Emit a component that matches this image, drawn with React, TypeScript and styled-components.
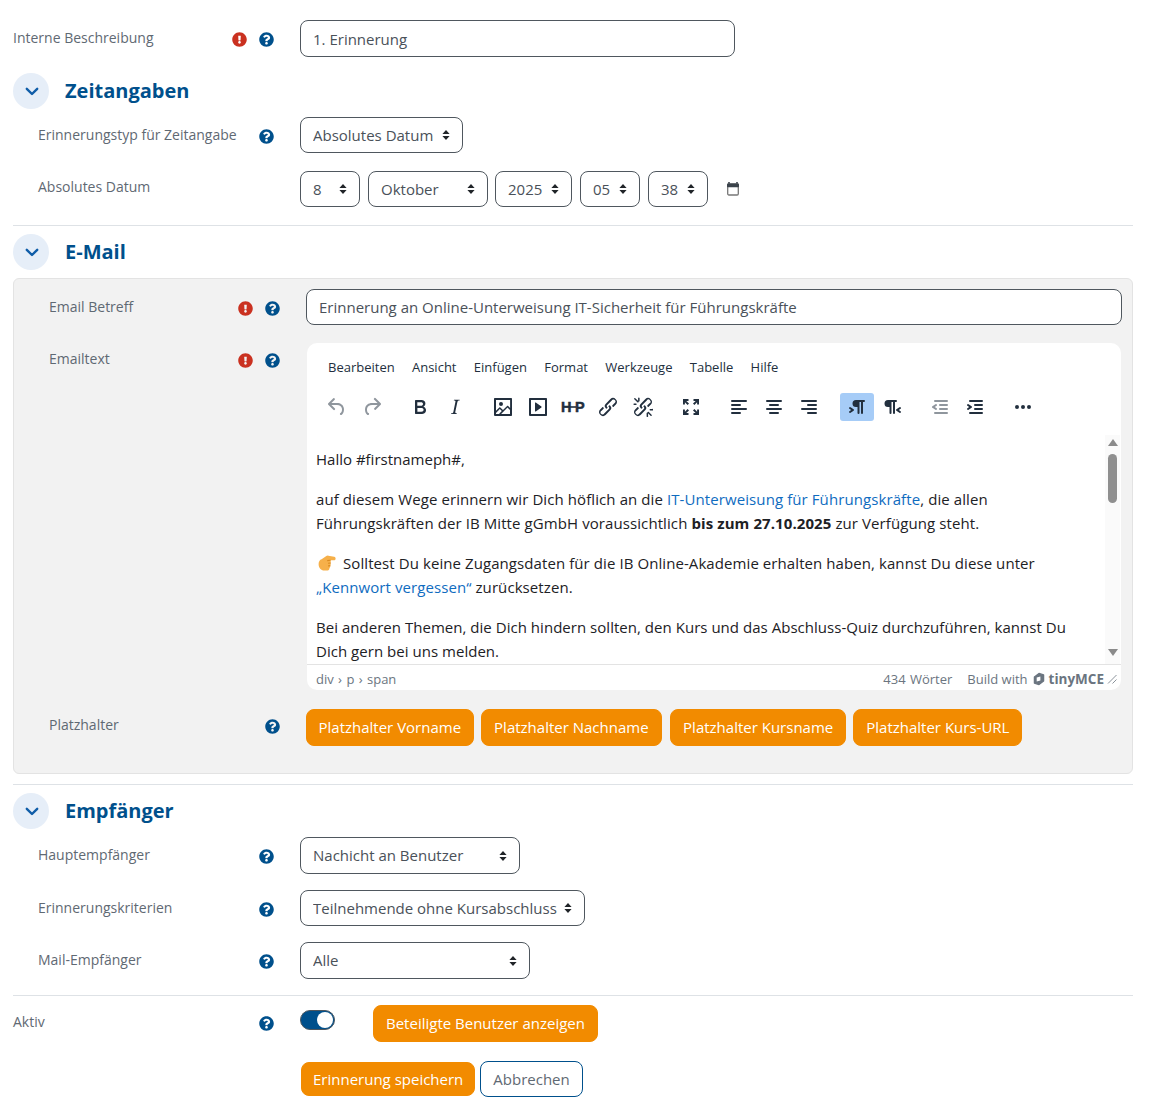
import React from "react";
import styled, { createGlobalStyle } from "styled-components";
import { FaQuestionCircle, FaExclamationCircle } from "react-icons/fa";

const Global = createGlobalStyle`
  html, body { margin: 0; padding: 0; background: #fff; }
  body { font-family: "Open Sans", "Noto Sans", sans-serif; font-size: 15px; color: #1d2125; }
  * { box-sizing: border-box; }
`;

const arrows = `url("data:image/svg+xml,%3Csvg xmlns='http://www.w3.org/2000/svg' width='10' height='12' viewBox='0 0 10 12'%3E%3Cpath d='M5 1l3.6 4H1.4zM5 11L1.4 7h7.2z' fill='%23212529'/%3E%3C/svg%3E")`;

const Page = styled.div`
  width: 1120px;
  margin-left: 13px;
  padding-top: 20px;
  padding-bottom: 21px;
`;
const Row = styled.div<{ $mb?: number; $offset?: number }>`
  display: grid;
  grid-template-columns: ${(p) => 218 + (p.$offset ?? 0)}px 69px 1fr;
  margin-bottom: ${(p) => p.$mb ?? 0}px;
`;
const Label = styled.div<{ $pad?: number; $top?: number }>`
  padding-left: ${(p) => p.$pad ?? 0}px;
  padding-top: ${(p) => p.$top ?? 7}px;
  font-size: 14px;
  line-height: 21px;
  white-space: nowrap;
  color: #5f6973;
`;
const Icons = styled.div<{ $top?: number }>`
  display: grid;
  grid-template-columns: 16px 16px;
  column-gap: 11.5px;
  padding-top: ${(p) => p.$top ?? 12}px;
  align-items: start;
  justify-items: center;
  svg { display: block; }
`;
const Warn = styled(FaExclamationCircle)`
  color: #ca3120;
  grid-column: 1;
`;
const Help = styled(FaQuestionCircle)`
  color: #00508c;
  grid-column: 2;
`;
const Controls = styled.div<{ $gap?: number }>`
  display: flex;
  align-items: center;
  gap: ${(p) => p.$gap ?? 8}px;
`;
const TextInput = styled.input<{ $w: number; $h?: number }>`
  width: ${(p) => p.$w}px;
  height: ${(p) => p.$h ?? 37}px;
  border: 1px solid #4f575e;
  border-radius: 8px;
  padding: 0 12px;
  font: 15px "Open Sans", sans-serif;
  color: #4a5159;
  background: #fff;
  outline: none;
`;
const Select = styled.select<{ $w: number; $h?: number; $mr?: number }>`
  appearance: none;
  width: ${(p) => p.$w}px;
  height: ${(p) => p.$h ?? 36}px;
  margin-right: ${(p) => p.$mr ?? 0}px;
  border: 1px solid #4f575e;
  border-radius: 8px;
  padding: 0 12px ${(p) => (p.$h === 37 ? 2 : 0)}px;
  font: 15px "Open Sans", sans-serif;
  color: #4a5159;
  background: #fff ${arrows} no-repeat right 11px center;
  outline: none;
`;
const SectionHead = styled.div<{ $mb?: number }>`
  display: flex;
  align-items: center;
  gap: 16px;
  height: 36px;
  margin-bottom: ${(p) => p.$mb ?? 8}px;
`;
const Chevron = styled.div`
  width: 36px;
  height: 36px;
  border-radius: 50%;
  background: #e6eef8;
  display: flex;
  align-items: center;
  justify-content: center;
  padding-left: 1px;
  color: #0f5da8;
`;
const Title = styled.h3`
  margin: 0;
  padding-bottom: 2px;
  font-size: 20px;
  font-weight: 700;
  color: #00508c;
`;
const Rule = styled.hr<{ $mt: number; $mb: number }>`
  border: 0;
  border-top: 1px solid #dee2e6;
  margin: ${(p) => p.$mt}px 0 ${(p) => p.$mb}px;
`;
const Panel = styled.div`
  background: #f2f2f2;
  border: 1px solid #e3e3e3;
  border-radius: 6px;
  padding: 10px 0 27px;
  height: 496px;
`;
const Editor = styled.div`
  width: 814px;
  height: 347px;
  margin-left: 1px;
  background: #fff;
  border-radius: 10px;
  display: flex;
  flex-direction: column;
  overflow: hidden;
`;
const MenuBar = styled.div`
  display: flex;
  gap: 17.3px;
  height: 48px;
  padding: 15px 0 0 21px;
  font-size: 13px;
  line-height: 18px;
  color: #222f3e;
`;
const ToolBar = styled.div`
  display: flex;
  height: 44px;
  padding: 2px 0 0 13px;
`;
const Group = styled.div`
  display: flex;
  gap: 1px;
  margin-right: 14px;
`;
const Tool = styled.div<{ $active?: boolean; $off?: boolean }>`
  width: 34px;
  height: 28px;
  border-radius: 3px;
  display: flex;
  align-items: center;
  justify-content: center;
  background: ${(p) => (p.$active ? "#a6ccf7" : "transparent")};
  color: #222f3e;
  opacity: ${(p) => (p.$off ? 0.5 : 1)};
  svg { fill: currentColor; display: block; }
`;
const H5PText = styled.text`
  font-family: "Liberation Sans", sans-serif;
  font-weight: 700;
  font-size: 14.5px;
  stroke: currentColor;
  stroke-width: 0.5px;
`;
const Body = styled.div`
  flex: 1;
  min-height: 0;
  display: flex;
`;
const Content = styled.div`
  flex: 1;
  height: 229px;
  overflow: hidden;
  padding: 12px 17px 0 9px;
  font-size: 15px;
  line-height: 24px;
  color: #1d2125;
  a { color: #0f6cbf; text-decoration: none; }
  b { font-weight: 700; }
`;
const Para = styled.p<{ $ls?: number }>`
  margin: 0 0 16px;
  letter-spacing: ${(p) => p.$ls ?? 0}px;
`;
const Hand = styled.svg`
  display: inline-block;
  width: 18px;
  height: 18px;
  vertical-align: -3px;
  margin: 0 7px 0 2px;
`;
const Track = styled.div`
  width: 15px;
  height: 229px;
  margin-right: 1px;
  background: #fafafa;
  display: flex;
  flex-direction: column;
  align-items: center;
  padding-top: 4px;
`;
const ScrollUp = styled.div`
  width: 0;
  height: 0;
  border-left: 5px solid transparent;
  border-right: 5px solid transparent;
  border-bottom: 7px solid #8a8a8a;
`;
const Thumb = styled.div`
  width: 9px;
  height: 49px;
  border-radius: 5px;
  background: #8f8f8f;
  margin-top: 8px;
`;
const ScrollDown = styled.div`
  width: 0;
  height: 0;
  border-left: 5px solid transparent;
  border-right: 5px solid transparent;
  border-top: 7px solid #8a8a8a;
  margin-top: auto;
  margin-bottom: 8px;
`;
const Status = styled.div`
  height: 26px;
  border-top: 1px solid #e3e3e3;
  display: flex;
  align-items: center;
  padding: 3px 4px 0 9px;
  font-size: 13px;
  color: #6b7580;
`;
const Path = styled.span`
  margin-right: auto;
  word-spacing: 1px;
`;
const Words = styled.span`
  margin-right: 15px;
  word-spacing: 1px;
`;
const Tiny = styled.span`
  display: flex;
  align-items: center;
  gap: 4px;
  margin-left: 5px;
  font-weight: 700;
  font-size: 13.5px;
  svg { display: block; }
`;
const Resize = styled.svg`
  margin-left: 3px;
  display: block;
`;
const Orange = styled.button<{ $h?: number; $pad?: number; $ml?: number }>`
  height: ${(p) => p.$h ?? 37}px;
  margin-left: ${(p) => p.$ml ?? 0}px;
  padding: 0 ${(p) => p.$pad ?? 12}px ${(p) => (p.$h === 34 ? 0 : 2)}px;
  background: #f28b00;
  color: #fff;
  border: 1px solid #f28b00;
  border-radius: 8px;
  font: 15px "Open Sans", sans-serif;
  white-space: nowrap;
`;
const Outline = styled.button`
  height: 36px;
  padding: 0 12px;
  background: #fff;
  color: #5f6973;
  border: 1px solid #00508c;
  border-radius: 8px;
  font: 15px "Open Sans", sans-serif;
`;
const Toggle = styled.div`
  width: 35px;
  height: 20px;
  border-radius: 10px;
  background: #00508c;
  border: 1px solid #4f575e;
  display: flex;
  justify-content: flex-end;
  align-items: center;
  padding-right: 1px;
  margin-top: 5px;
`;
const Knob = styled.div`
  width: 16px;
  height: 16px;
  border-radius: 50%;
  background: #fff;
`;
const AktivRow = styled.div`
  display: flex;
  gap: 38px;
  align-items: flex-start;
`;
const SaveRow = styled.div`
  display: flex;
  align-items: center;
  gap: 5px;
  padding-left: 288px;
  margin-top: 19px;
`;

const Glyph = ({ d, s = 24 }: { d: string; s?: number }) => (
  <svg width={s} height={s} viewBox="0 0 24 24"><path d={d} /></svg>
);

const ChevronIcon = () => (
  <svg width="14" height="9" viewBox="0 0 14 9" fill="none" stroke="currentColor" strokeWidth="2.4" strokeLinecap="round" strokeLinejoin="round">
    <path d="M1.8 1.8L7 7l5.2-5.2" />
  </svg>
);

const CalendarIcon = () => (
  <svg width="14" height="16" viewBox="0 0 14 16" style={{ marginLeft: 10 }}>
    <path d="M3 1v2M11 1v2" stroke="#3b434b" strokeWidth="1.6" />
    <rect x="1.7" y="3" width="10.6" height="11" rx="1.2" fill="#fff" stroke="#777" strokeWidth="1.3" />
    <rect x="1" y="2.6" width="12" height="3.6" rx="1" fill="#3b434b" />
  </svg>
);

const I = {
  undo: "M6.4 8H12c3.7 0 6.2 2 6.8 5.1.6 2.7-.4 5.6-2.3 6.8a1 1 0 0 1-1-1.8c1.1-.6 1.8-2.7 1.4-4.6-.5-2.1-2.1-3.5-4.9-3.5H6.4l3.3 3.3a1 1 0 1 1-1.4 1.4l-5-5a1 1 0 0 1 0-1.4l5-5a1 1 0 0 1 1.4 1.4L6.4 8Z",
  redo: "M17.6 10H12c-2.8 0-4.4 1.4-4.9 3.5-.4 2 .3 4 1.4 4.6a1 1 0 1 1-1 1.8c-2-1.2-2.9-4.1-2.3-6.8.6-3 3-5.1 6.8-5.1h5.6l-3.3-3.3a1 1 0 1 1 1.4-1.4l5 5a1 1 0 0 1 0 1.4l-5 5a1 1 0 0 1-1.4-1.4l3.3-3.3Z",
  bold: "M7.8 19c-.3 0-.5 0-.6-.2l-.2-.5V5.7c0-.2 0-.4.2-.5l.6-.2h5c1.5 0 2.7.3 3.5 1 .7.6 1.1 1.4 1.1 2.5a3 3 0 0 1-.6 1.9c-.4.6-1 1-1.6 1.2.4.1.9.3 1.3.6s.8.7 1 1.2c.4.4.5 1 .5 1.6 0 1.3-.4 2.3-1.3 3-.8.7-2.1 1-3.8 1H7.8Zm5-8.3c.6 0 1.2-.1 1.6-.5.4-.3.6-.7.6-1.3 0-1.1-.8-1.7-2.3-1.7H9.3v3.5h3.4Zm.5 6c.7 0 1.3-.1 1.7-.4.4-.4.6-.9.6-1.5s-.2-1-.7-1.4c-.4-.3-1-.4-2-.4H9.4v3.8h4Z",
  italic: "M16.7 4.7l-.1.9h-.3c-.6 0-1 0-1.4.3-.3.3-.4.6-.5 1.1l-2.1 9.8v.6c0 .5.4.8 1.4.8h.2l-.2.8H8l.2-.8h.2c1.1 0 1.8-.5 2-1.5l2-9.8.1-.5c0-.6-.4-.8-1.4-.8h-.3l.2-.9h5.8Z",
  image: "M5 15.7l3.3-3.2c.3-.3.7-.3 1 0L12 15l4.1-4c.3-.4.8-.4 1 0l2 1.9V5H5v10.7ZM5 18V19h3l2.8-2.9-2-2L5 17.9Zm14-3l-2.5-2.4-6.4 6.5H19v-4ZM4 3h16c.6 0 1 .4 1 1v16c0 .6-.4 1-1 1H4a1 1 0 0 1-1-1V4c0-.6.4-1 1-1Zm6 8a2 2 0 1 0 0-4 2 2 0 0 0 0 4Z",
  embed: "M4 3h16c.6 0 1 .4 1 1v16c0 .6-.4 1-1 1H4a1 1 0 0 1-1-1V4c0-.6.4-1 1-1Zm1 2v14h14V5H5Zm4.8 2.6l5.6 4a.5.5 0 0 1 0 .8l-5.6 4A.5.5 0 0 1 9 16V8a.5.5 0 0 1 .8-.4Z",
  link: "M6.2 12.3a1 1 0 0 1 1.4 1.4l-2 2a2 2 0 1 0 2.6 2.8l4.8-4.8a1 1 0 0 0 0-1.4 1 1 0 1 1 1.4-1.3 2.9 2.9 0 0 1 0 4L9.6 20a3.9 3.9 0 0 1-5.5-5.5l2-2Zm11.6-.6a1 1 0 0 1-1.4-1.4l2-2a2 2 0 1 0-2.6-2.8L11 10.3a1 1 0 0 0 0 1.4A1 1 0 1 1 9.6 13a2.9 2.9 0 0 1 0-4L14.4 4a3.9 3.9 0 0 1 5.5 5.5l-2 2Z",
  unlink: "M6.2 12.3a1 1 0 0 1 1.4 1.4l-2.1 2a2 2 0 1 0 2.7 2.8l4.8-4.8a1 1 0 0 0 0-1.4 1 1 0 1 1 1.4-1.3 2.9 2.9 0 0 1 0 4L9.6 20a3.9 3.9 0 0 1-5.5-5.5l2-2Zm11.6-.6a1 1 0 0 1-1.4-1.4l2.1-2a2 2 0 1 0-2.7-2.8L11 10.3a1 1 0 0 0 0 1.4A1 1 0 1 1 9.6 13a2.9 2.9 0 0 1 0-4L14.4 4a3.9 3.9 0 0 1 5.5 5.5l-2 2ZM7.6 6.3a.8.8 0 0 1-1 1.1L3.3 4.2a.7.7 0 1 1 1-1l3.2 3.1ZM5.1 8.6a.8.8 0 0 1 0 1.5H3a.8.8 0 0 1 0-1.5H5Zm3.5-2.5a.8.8 0 0 1-1.5 0V3a.8.8 0 0 1 1.5 0V5Zm8 11.6a.8.8 0 0 1 1-1l3.2 3.2a.8.8 0 0 1-1 1l-3.2-3.2Zm2.5-2.3a.8.8 0 0 1 0-1.5H21a.8.8 0 1 1 0 1.5h-2Zm-3.5 2.5a.8.8 0 0 1 1.5 0V21a.8.8 0 1 1-1.5 0V19Z",
  full: "M4 4h5.5v1.9H7.3L10 8.6 8.6 10 5.9 7.3v2.2H4V4Zm16 0v5.5h-1.9V7.3L15.4 10 14 8.6l2.7-2.7h-2.2V4H20ZM4 20v-5.5h1.9v2.2L8.6 14l1.4 1.4-2.7 2.7h2.2V20H4Zm16 0h-5.5v-1.9h2.2L14 15.4l1.4-1.4 2.7 2.7v-2.2H20V20Z",
  left: "M5 5h14a1 1 0 0 1 0 2H5a1 1 0 0 1 0-2Zm0 4h8a1 1 0 0 1 0 2H5a1 1 0 0 1 0-2Zm0 8h8a1 1 0 0 1 0 2H5a1 1 0 0 1 0-2Zm0-4h14a1 1 0 0 1 0 2H5a1 1 0 0 1 0-2Z",
  center: "M5 5h14a1 1 0 0 1 0 2H5a1 1 0 0 1 0-2Zm3 4h8a1 1 0 0 1 0 2H8a1 1 0 0 1 0-2Zm0 8h8a1 1 0 0 1 0 2H8a1 1 0 0 1 0-2Zm-3-4h14a1 1 0 0 1 0 2H5a1 1 0 0 1 0-2Z",
  right: "M5 5h14a1 1 0 0 1 0 2H5a1 1 0 0 1 0-2Zm6 4h8a1 1 0 0 1 0 2h-8a1 1 0 0 1 0-2Zm0 8h8a1 1 0 0 1 0 2h-8a1 1 0 0 1 0-2Zm-6-4h14a1 1 0 0 1 0 2H5a1 1 0 0 1 0-2Z",
  ltr: "M11 5h8a1 1 0 0 1 0 2h-1v11a1 1 0 0 1-2 0V7h-1.5v11a1 1 0 0 1-2 0v-6H11a3.5 3.5 0 0 1 0-7ZM4.4 16.2L6.2 15l-1.8-1.2a1 1 0 0 1 1.2-1.6l3 2a1 1 0 0 1 0 1.6l-3 2a1 1 0 1 1-1.2-1.6Z",
  rtl: "M8 5h8a1 1 0 0 1 0 2h-1v11a1 1 0 0 1-2 0V7h-1.5v11a1 1 0 0 1-2 0v-6H8A3.5 3.5 0 0 1 8 5Zm8.4 9.2l3-2a1 1 0 0 1 1.2 1.6L18.8 15l1.8 1.2a1 1 0 1 1-1.2 1.6l-3-2a1 1 0 0 1 0-1.6Z",
  outdent: "M7 5h12a1 1 0 0 1 0 2H7a1 1 0 1 1 0-2Zm5 4h7a1 1 0 0 1 0 2h-7a1 1 0 0 1 0-2Zm0 4h7a1 1 0 0 1 0 2h-7a1 1 0 0 1 0-2Zm-5 4h12a1 1 0 0 1 0 2H7a1 1 0 0 1 0-2Zm1.6-3.8a1 1 0 0 1-1.2 1.6l-3-2a1 1 0 0 1 0-1.6l3-2a1 1 0 0 1 1.2 1.6L6.8 12l1.8 1.2Z",
  indent: "M7 5h12a1 1 0 0 1 0 2H7a1 1 0 1 1 0-2Zm5 4h7a1 1 0 0 1 0 2h-7a1 1 0 0 1 0-2Zm0 4h7a1 1 0 0 1 0 2h-7a1 1 0 0 1 0-2Zm-5 4h12a1 1 0 0 1 0 2H7a1 1 0 0 1 0-2Zm-2.6-3.8L6.2 12l-1.8-1.2a1 1 0 0 1 1.2-1.6l3 2a1 1 0 0 1 0 1.6l-3 2a1 1 0 1 1-1.2-1.6Z",
  more: "M6 10a2 2 0 0 1 2 2 2 2 0 0 1-2 2 2 2 0 0 1-2-2 2 2 0 0 1 2-2Zm12 0a2 2 0 0 1 2 2 2 2 0 0 1-2 2 2 2 0 0 1-2-2 2 2 0 0 1 2-2Zm-6 0a2 2 0 0 1 2 2 2 2 0 0 1-2 2 2 2 0 0 1-2-2 2 2 0 0 1 2-2Z",
};

const HandIcon = () => (
  <Hand viewBox="0 0 18 18">
    <g transform="translate(0 -2) scale(1 1.25)">
      <path d="M.6 9.5c0-2 1.2-3.4 3-3.8L7.6 3.6c1-.5 1.8-.8 2.7-.7l5.9.9c1 .2 1.5.8 1.4 1.5-.1.8-.8 1.2-1.7 1.2h-3.5c.4.7.5 1.5.2 2.2.3.7.2 1.5-.3 2.1.1.8-.2 1.5-.8 1.9 0 1-.7 2-1.8 2H6.2C3 14.7.6 12.7.6 9.5Z" fill="#f6b04a" />
      <path d="M12.6 6.6l-3.4.3M12.7 8.8l-2.6.2M12.3 10.9l-2.2.2" stroke="#d98a1f" strokeWidth="0.9" fill="none" />
    </g>
  </Hand>
);

const H5PIcon = () => (
  <svg width="24" height="24" viewBox="0 0 24 24">
    <H5PText x="0" y="17">H</H5PText>
    <H5PText x="14" y="17">P</H5PText>
    <rect x="8" y="11.2" width="7" height="1.6" />
  </svg>
);

const TinyLogo = () => (
  <svg width="12" height="14" viewBox="0 0 13 14">
    <path d="M6.5 1l5 1.6v6.6L6.5 13l-5-1.6V4.8z" fill="#6b7580" stroke="#6b7580" strokeWidth="1.4" strokeLinejoin="round" />
    <path d="M4 5.4l4-1.2v4.4L4 9.8z" fill="#fff" />
  </svg>
);

export default function App() {
  return (
    <Page>
      <Global />
      <Row $mb={16}>
        <Label>Interne Beschreibung</Label>
        <Icons><Warn size={15} /><Help size={15} /></Icons>
        <Controls><TextInput $w={435} defaultValue="1. Erinnerung" /></Controls>
      </Row>

      <SectionHead>
        <Chevron><ChevronIcon /></Chevron>
        <Title>Zeitangaben</Title>
      </SectionHead>
      <Row $mb={18}>
        <Label $pad={25}>Erinnerungstyp für Zeitangabe</Label>
        <Icons><Help size={15} /></Icons>
        <Controls><Select $w={163}><option>Absolutes Datum</option></Select></Controls>
      </Row>
      <Row>
        <Label $pad={25} $top={5}>Absolutes Datum</Label>
        <Icons />
        <Controls>
          <Select $w={60}><option>8</option></Select>
          <Select $w={120} $mr={-1}><option>Oktober</option></Select>
          <Select $w={77}><option>2025</option></Select>
          <Select $w={60}><option>05</option></Select>
          <Select $w={60}><option>38</option></Select>
          <CalendarIcon />
        </Controls>
      </Row>
      <Rule $mt={18} $mb={8} />

      <SectionHead>
        <Chevron><ChevronIcon /></Chevron>
        <Title>E-Mail</Title>
      </SectionHead>
      <Panel>
        <Row $mb={18} $offset={5}>
          <Label $pad={35}>Email Betreff</Label>
          <Icons><Warn size={15} /><Help size={15} /></Icons>
          <Controls><TextInput $w={816} $h={36} defaultValue="Erinnerung an Online-Unterweisung IT-Sicherheit für Führungskräfte" /></Controls>
        </Row>
        <Row $mb={19} $offset={5}>
          <Label $pad={35} $top={5}>Emailtext</Label>
          <Icons $top={10}><Warn size={15} /><Help size={15} /></Icons>
          <Editor>
            <MenuBar>
              <span>Bearbeiten</span><span>Ansicht</span><span>Einfügen</span><span>Format</span><span>Werkzeuge</span><span>Tabelle</span><span>Hilfe</span>
            </MenuBar>
            <ToolBar>
              <Group>
                <Tool $off><Glyph d={I.undo} /></Tool>
                <Tool $off><Glyph d={I.redo} /></Tool>
              </Group>
              <Group>
                <Tool><Glyph d={I.bold} /></Tool>
                <Tool><Glyph d={I.italic} /></Tool>
              </Group>
              <Group>
                <Tool><Glyph d={I.image} /></Tool>
                <Tool><Glyph d={I.embed} /></Tool>
                <Tool><H5PIcon /></Tool>
                <Tool><Glyph d={I.link} /></Tool>
                <Tool><Glyph d={I.unlink} /></Tool>
              </Group>
              <Group><Tool><Glyph d={I.full} /></Tool></Group>
              <Group>
                <Tool><Glyph d={I.left} /></Tool>
                <Tool><Glyph d={I.center} /></Tool>
                <Tool><Glyph d={I.right} /></Tool>
              </Group>
              <Group>
                <Tool $active><Glyph d={I.ltr} /></Tool>
                <Tool><Glyph d={I.rtl} /></Tool>
              </Group>
              <Group>
                <Tool $off><Glyph d={I.outdent} /></Tool>
                <Tool><Glyph d={I.indent} /></Tool>
              </Group>
              <Group><Tool><Glyph d={I.more} /></Tool></Group>
            </ToolBar>
            <Body>
              <Content>
                <Para>Hallo #firstnameph#,</Para>
                <Para $ls={0.09}>auf diesem Wege erinnern wir Dich höflich an die <a>IT-Unterweisung für Führungskräfte</a>, die allen Führungskräften der IB Mitte gGmbH voraussichtlich <b>bis zum 27.10.2025</b> zur Verfügung steht.</Para>
                <Para $ls={0.08}><HandIcon />Solltest Du keine Zugangsdaten für die IB Online-Akademie erhalten haben, kannst Du diese unter <a>„Kennwort vergessen“</a> zurücksetzen.</Para>
                <Para $ls={0.03}>Bei anderen Themen, die Dich hindern sollten, den Kurs und das Abschluss-Quiz durchzuführen, kannst Du Dich gern bei uns melden.</Para>
              </Content>
              <Track>
                <ScrollUp />
                <Thumb />
                <ScrollDown />
              </Track>
            </Body>
            <Status>
              <Path>div › p › span</Path>
              <Words>434 Wörter</Words>
              <span>Build with</span>
              <Tiny><TinyLogo />tinyMCE</Tiny>
              <Resize width="10" height="10" viewBox="0 0 10 10" fill="none" stroke="#8a929a" strokeWidth="1">
                <path d="M1 9.5L9.5 1M5.5 9.5l4-4" />
              </Resize>
            </Status>
          </Editor>
        </Row>
        <Row $offset={5}>
          <Label $pad={35} $top={5}>Platzhalter</Label>
          <Icons $top={10}><Help size={15} /></Icons>
          <Controls $gap={7}>
            <Orange $pad={11.5}>Platzhalter Vorname</Orange>
            <Orange $pad={12.5}>Platzhalter Nachname</Orange>
            <Orange $ml={1}>Platzhalter Kursname</Orange>
            <Orange>Platzhalter Kurs-URL</Orange>
          </Controls>
        </Row>
      </Panel>
      <Rule $mt={10} $mb={8} />

      <SectionHead>
        <Chevron><ChevronIcon /></Chevron>
        <Title>Empfänger</Title>
      </SectionHead>
      <Row $mb={16}>
        <Label $pad={25}>Hauptempfänger</Label>
        <Icons><Help size={15} /></Icons>
        <Controls><Select $w={220} $h={37}><option>Nachicht an Benutzer</option></Select></Controls>
      </Row>
      <Row $mb={16}>
        <Label $pad={25}>Erinnerungskriterien</Label>
        <Icons><Help size={15} /></Icons>
        <Controls><Select $w={285}><option>Teilnehmende ohne Kursabschluss</option></Select></Controls>
      </Row>
      <Row>
        <Label $pad={25}>Mail-Empfänger</Label>
        <Icons><Help size={15} /></Icons>
        <Controls><Select $w={230} $h={37}><option>Alle</option></Select></Controls>
      </Row>
      <Rule $mt={16} $mb={9} />

      <Row>
        <Label $top={6}>Aktiv</Label>
        <Icons $top={11}><Help size={15} /></Icons>
        <AktivRow>
          <Toggle><Knob /></Toggle>
          <Orange>Beteiligte Benutzer anzeigen</Orange>
        </AktivRow>
      </Row>
      <SaveRow>
        <Orange $h={34} $pad={11}>Erinnerung speichern</Orange>
        <Outline>Abbrechen</Outline>
      </SaveRow>
    </Page>
  );
}
